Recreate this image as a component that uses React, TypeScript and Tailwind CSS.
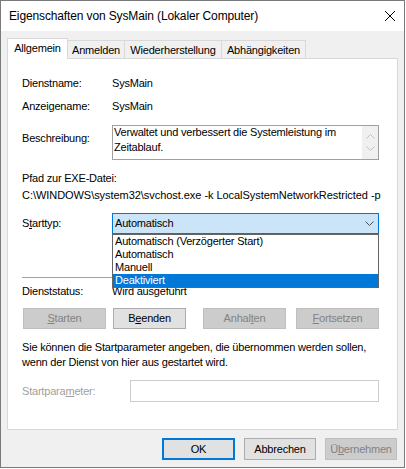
import React from "react";

function Chevron({ up, color }: { up?: boolean; color: string }) {
  return (
    <svg width="9" height="5" viewBox="0 0 9 5" className="block">
      <polyline
        points={up ? "0.5,4.5 4.5,0.5 8.5,4.5" : "0.5,0.5 4.5,4.5 8.5,0.5"}
        fill="none"
        stroke={color}
        strokeWidth="1"
      />
    </svg>
  );
}

export default function App() {
  return (
    <div className="w-[406px] h-[469px] bg-white font-['Liberation_Sans',Arial,sans-serif] text-black text-[11px] tracking-[-0.2px]">
      <div className="w-[405px] h-[468px] border border-[#7a7a7a] bg-[#f0f0f0] flex flex-col">
        {/* Title bar */}
        <div className="h-[30px] bg-white flex items-center justify-between pl-[8px] pr-[8px] shrink-0">
          <span className="text-[12px] tracking-[-0.13px]">Eigenschaften von SysMain (Lokaler Computer)</span>
          <svg width="10" height="10" viewBox="0 0 10 10" className="mr-[1px]">
            <line x1="0" y1="0" x2="10" y2="10" stroke="#000" strokeWidth="1" />
            <line x1="10" y1="0" x2="0" y2="10" stroke="#000" strokeWidth="1" />
          </svg>
        </div>

        {/* Body */}
        <div className="flex-1 flex flex-col px-[6px] pt-[7px]">
          {/* Tabs */}
          <div className="flex items-end h-[21px] relative z-10">
            <div className="w-[61px] h-[21px] bg-white border-l border-r border-t border-[#d9d9d9] flex items-center justify-center pb-[2px]">
              Allgemein
            </div>
            <div className="w-[57px] h-[19px] border-r border-t border-[#d9d9d9] flex items-center justify-center">
              Anmelden
            </div>
            <div className="w-[97px] h-[19px] border-r border-t border-[#d9d9d9] flex items-center justify-center">
              Wiederherstellung
            </div>
            <div className="w-[84px] h-[19px] border-r border-t border-[#d9d9d9] flex items-center justify-center">
              Abhängigkeiten
            </div>
          </div>

          {/* Panel */}
          <div className="-mt-[1px] h-[372px] bg-white border border-[#d9d9d9] pl-[14px] pr-[18px] pt-[16px] flex flex-col">
            <div className="flex h-[16px] leading-[16px]">
              <div className="w-[90px]">Dienstname:</div>
              <div>SysMain</div>
            </div>
            <div className="flex h-[16px] leading-[16px] mt-[7px]">
              <div className="w-[90px]">Anzeigename:</div>
              <div>SysMain</div>
            </div>
            <div className="flex mt-[11px]">
              <div className="w-[90px] mt-[5px] leading-[16px]">Beschreibung:</div>
              <div className="flex-1 h-[35px] border border-[#a0a0a0] flex">
                <div className="flex-1 leading-[15px] pl-[1px] -mt-[1px]">
                  Verwaltet und verbessert die Systemleistung im
                  <br />
                  Zeitablauf.
                </div>
                <div className="w-[16px] bg-[#f0f0f0] flex flex-col items-center justify-between pt-[8px] pb-[8px]">
                  <Chevron up color="#c2c2c2" />
                  <Chevron color="#c2c2c2" />
                </div>
              </div>
            </div>
            <div className="mt-[10px] h-[16px] leading-[16px]">Pfad zur EXE-Datei:</div>
            <div className="mt-[1px] h-[16px] leading-[16px] tracking-[-0.05px] whitespace-nowrap">
              C:\WINDOWS\system32\svchost.exe -k LocalSystemNetworkRestricted -p
            </div>
            <div className="flex items-center mt-[10px]">
              <div className="w-[90px]">
                S<span className="underline">t</span>arttyp:
              </div>
              <div className="relative flex-1 h-[21px]">
                <div className="h-[21px] bg-[#cce4f7] border border-[#0078d7] flex items-center justify-between pl-[2px] pr-[4px]">
                  <span>Automatisch</span>
                  <Chevron color="#505050" />
                </div>
                <div className="absolute left-0 right-0 top-[21px] z-20 bg-white border border-[#646464] flex flex-col">
                  <div className="h-[13px] leading-[13px] pl-[2px]">Automatisch (Verzögerter Start)</div>
                  <div className="h-[13px] leading-[13px] pl-[2px]">Automatisch</div>
                  <div className="h-[13px] leading-[13px] pl-[2px]">Manuell</div>
                  <div className="h-[13px] leading-[13px] pl-[2px] bg-[#0078d7] text-white">Deaktiviert</div>
                </div>
              </div>
            </div>
            <div className="mt-[43px] h-[1px] bg-[#a0a0a0]" />
            <div className="flex h-[16px] leading-[16px] mt-[5px]">
              <div className="w-[90px]">Dienststatus:</div>
              <div>Wird ausgeführt</div>
            </div>
            <div className="flex mt-[9px] h-[21px]">
              <div className="ml-[1px] w-[83px] h-[21px] bg-[#cccccc] border border-[#bfbfbf] text-[#838383] flex items-center justify-center">
                <span><span className="underline">S</span>tarten</span>
              </div>
              <div className="ml-[7px] w-[73px] h-[21px] bg-[#e1e1e1] border border-[#adadad] flex items-center justify-center">
                <span>B<span className="underline">e</span>enden</span>
              </div>
              <div className="ml-[17px] w-[83px] h-[21px] bg-[#cccccc] border border-[#bfbfbf] text-[#838383] flex items-center justify-center">
                <span>Anhal<span className="underline">t</span>en</span>
              </div>
              <div className="ml-[10px] w-[83px] h-[21px] bg-[#cccccc] border border-[#bfbfbf] text-[#838383] flex items-center justify-center">
                <span><span className="underline">F</span>ortsetzen</span>
              </div>
            </div>
            <div className="mt-[11px] leading-[15px]">
              Sie können die Startparameter angeben, die übernommen werden sollen,
              <br />
              wenn der Dienst von hier aus gestartet wird.
            </div>
            <div className="flex items-center mt-[10px]">
              <div className="w-[108px] text-[#a0a0a0]">
                Startpara<span className="underline">m</span>eter:
              </div>
              <div className="flex-1 h-[22px] border border-[#cccccc] bg-white" />
            </div>
          </div>

          {/* Dialog buttons */}
          <div className="flex justify-end mt-[8px] pr-[1px] gap-[9px]">
            <div className="w-[73px] h-[22px] bg-[#e1e1e1] border-2 border-[#0078d7] flex items-center justify-center">
              OK
            </div>
            <div className="w-[72px] h-[22px] bg-[#e1e1e1] border border-[#adadad] flex items-center justify-center">
              Abbrechen
            </div>
            <div className="w-[72px] h-[22px] bg-[#cccccc] border border-[#bfbfbf] text-[#838383] flex items-center justify-center">
              <span>Ü<span className="underline">b</span>ernehmen</span>
            </div>
          </div>
        </div>
      </div>
    </div>
  );
}
